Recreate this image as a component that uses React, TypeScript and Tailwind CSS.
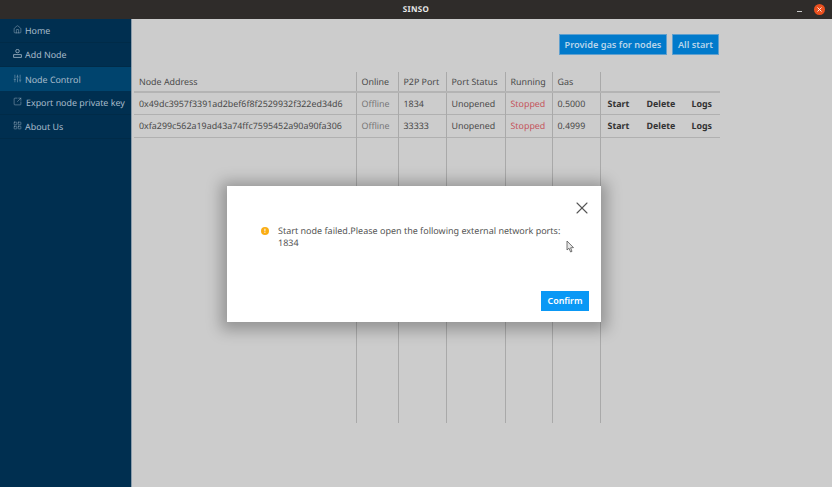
import { Home, SlidersVertical, SquareArrowOutUpRight, LayoutGrid, X } from "lucide-react";

function AddNodeIcon({ className }: { className?: string }) {
  return (
    <svg className={className} width="9" height="9" viewBox="0 0 9 9" fill="none" stroke="currentColor" strokeWidth="0.8">
      <rect x="2.8" y="0.5" width="3.4" height="3.2" rx="1.4" />
      <path d="M0.6 8.4 V5.6 H8.4 V8.4 Z" />
    </svg>
  );
}

const menu = [
  { label: "Home", icon: Home, active: false, pad: "pl-[3px]" },
  { label: "Add Node", icon: AddNodeIcon, active: false, pad: "pl-[3px]" },
  { label: "Node Control", icon: SlidersVertical, active: true, pad: "pl-[3px]" },
  { label: "Export node private key", icon: SquareArrowOutUpRight, active: false, pad: "pl-[4px]" },
  { label: "About Us", icon: LayoutGrid, active: false, pad: "pl-[3px]" },
];

const nodes = [
  { address: "0x49dc3957f3391ad2bef6f8f2529932f322ed34d6", port: "1834", gas: "0.5000" },
  { address: "0xfa299c562a19ad43a74ffc7595452a90a90fa306", port: "33333", gas: "0.4999" },
];

const headers = ["Node Address", "Online", "P2P Port", "Port Status", "Running", "Gas", ""];
const cell = "border-r border-[#a9a9a9] pl-[5px] pr-0 text-left font-normal whitespace-nowrap last:border-r-0";

export default function App() {
  return (
    <div className="relative flex h-[487px] w-[832px] flex-col overflow-hidden bg-[#cccccc] font-['Noto_Sans','Open_Sans',sans-serif] text-[8.9px] text-[#4a4a4a] [text-rendering:geometricPrecision]">
      {/* Title bar */}
      <div className="flex h-[19px] shrink-0 items-center bg-[#2f2c2a] pl-[35px] pr-[7px] text-white">
        <div className="flex-1 pt-[1px] text-center text-[8px] font-bold tracking-[0.3px] text-[#e8e8e8]">SINSO</div>
        <div className="mr-[12px] mt-[3px] h-px w-[5px] bg-[#c8c8c8]" />
        <div className="flex h-[11px] w-[11px] items-center justify-center rounded-full bg-[#e9501f]">
          <X size={7} strokeWidth={3} color="#ffffff" />
        </div>
      </div>

      <div className="flex min-h-0 flex-1">
        {/* Sidebar */}
        <div className="flex w-[132px] shrink-0 flex-col border-r border-[#8b9cab] bg-[#002f50] text-[#a8bccb]">
          {menu.map((item) => (
            <div
              key={item.label}
              className={`flex h-[24px] items-center pl-[13px] pt-[1px] ${item.active ? "bg-[#00446e]" : "border-b border-[#002b48]"}`}
            >
              <item.icon size={9} strokeWidth={1.2} className="mb-[3px] shrink-0" />
              <span className={`${item.pad} whitespace-nowrap`}>{item.label}</span>
            </div>
          ))}
        </div>

        {/* Main */}
        <div className="flex min-w-0 flex-1 flex-col pl-[2px]">
          <div className="flex h-[53px] shrink-0 items-start justify-end gap-[5px] pr-[113px] pt-[15px]">
            <button className="h-[21px] w-[108px] border border-[#5fa0cf] bg-[#017acb] text-[9.2px] font-semibold text-[#b9d5ea]">
              Provide gas for nodes
            </button>
            <button className="h-[21px] w-[47px] border border-[#5fa0cf] bg-[#017acb] text-[9.2px] font-semibold text-[#b9d5ea]">
              All start
            </button>
          </div>

          <table className="w-[586px] table-fixed border-collapse">
            <colgroup>
              <col className="w-[222px]" />
              <col className="w-[42px]" />
              <col className="w-[48px]" />
              <col className="w-[59px]" />
              <col className="w-[47px]" />
              <col className="w-[48px]" />
              <col className="w-[120px]" />
            </colgroup>
            <thead>
              <tr className="h-[20px] border-b-2 border-[#b4b4b4]">
                {headers.map((h) => (
                  <th key={h} className={cell}>{h}</th>
                ))}
              </tr>
            </thead>
            <tbody>
              {nodes.map((n) => (
                <tr key={n.address} className="h-[22.5px] border-b border-[#b0b0b0]">
                  <td className={cell}>{n.address}</td>
                  <td className={`${cell} text-[#777777]`}>Offline</td>
                  <td className={cell}>{n.port}</td>
                  <td className={cell}>Unopened</td>
                  <td className={`${cell} text-[#c4545c]`}>Stopped</td>
                  <td className={cell}>{n.gas}</td>
                  <td className={cell}>
                    <div className="flex pl-[2px] font-bold text-[#333333]">
                      <span className="w-[39px]">Start</span>
                      <span className="w-[45px]">Delete</span>
                      <span>Logs</span>
                    </div>
                  </td>
                </tr>
              ))}
              <tr className="h-[286px]">
                {headers.map((h) => (
                  <td key={h} className={cell} />
                ))}
              </tr>
            </tbody>
          </table>
        </div>
      </div>

      {/* Dialog */}
      <div className="absolute left-[227px] top-[186px] flex h-[136px] w-[374px] flex-col bg-white shadow-[0_2px_14px_6px_rgba(0,0,0,0.28)]">
        <div className="flex justify-end pr-[9px] pt-[12px]">
          <X size={20} strokeWidth={1.3} color="#555555" />
        </div>
        <div className="flex items-start pl-[34px] pr-[30px] pt-[7px]">
          <div className="mt-[2px] flex h-[8px] w-[8px] shrink-0 items-center justify-center rounded-full bg-[#faad14] text-[6px] font-bold leading-none text-white">!</div>
          <p className="pl-[9px] text-[9px] leading-[12px] text-[#555555]">
            Start node failed.Please open the following external network ports:
            <br />
            1834
          </p>
        </div>
        <div className="mt-auto flex justify-end pb-[11px] pr-[12px]">
          <button className="h-[20px] w-[48px] bg-[#0a98f5] font-semibold text-white">Confirm</button>
        </div>
      </div>

      {/* Mouse pointer */}
      <svg className="absolute left-[566px] top-[240px]" width="9" height="13" viewBox="0 0 9 13">
        <path d="M1 1 L1 10 L3 8.2 L4.6 12 L6 11.4 L4.6 7.8 L7.5 7.6 Z" fill="#e8e8e8" stroke="#555555" strokeWidth="0.8" />
      </svg>
    </div>
  );
}
